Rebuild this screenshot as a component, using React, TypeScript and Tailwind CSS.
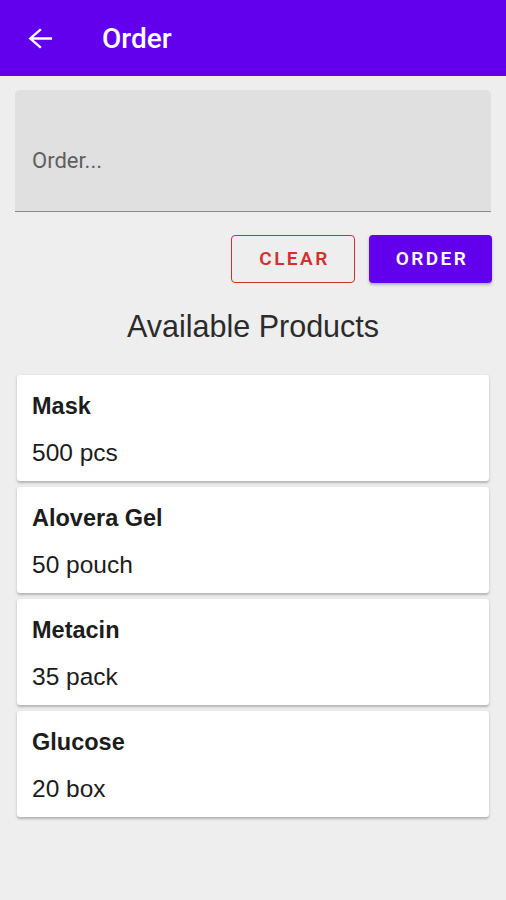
import React from "react";

type Product = {
  name: string;
  qty: string;
};

const products: Product[] = [
  { name: "Mask", qty: "500 pcs" },
  { name: "Alovera Gel", qty: "50 pouch" },
  { name: "Metacin", qty: "35 pack" },
  { name: "Glucose", qty: "20 box" },
];

function BackArrow() {
  return (
    <svg
      viewBox="4 4 16 16"
      width={24}
      height={21}
      preserveAspectRatio="none"
      fill="white"
      aria-hidden
    >
      <path d="M20 11.1H7.6l5.6-5.6L12 4.3 4.3 12l7.7 7.7 1.2-1.2-5.6-5.6H20v-1.8z" />
    </svg>
  );
}

const roboto = { fontFamily: "Roboto, 'Liberation Sans', sans-serif" };
const arial = { fontFamily: "'Liberation Sans', Arial, sans-serif" };

export default function App() {
  return (
    <div className="flex min-h-[900px] w-full flex-col bg-[#eeeeee]" style={roboto}>
      {/* Toolbar */}
      <header className="flex h-[76px] items-center bg-[#6200ee] pl-[28px]">
        <BackArrow />
        <h1 className="ml-[50px] mt-[2px] text-[28px] font-medium leading-none text-white">Order</h1>
      </header>

      {/* Input */}
      <div className="mx-[15px] mt-[14px] flex h-[122px] items-center rounded-t-[5px] border-b-[1.5px] border-[#8a8a8a] bg-[#e0e0e0] pl-[17px] pt-[20px]">
        <span className="text-[22px] text-[#5f5f5f]">Order...</span>
      </div>

      {/* Actions */}
      <div className="mt-[23px] flex justify-end gap-[14px] pr-[14px]">
        <button className="flex h-[48px] w-[124px] items-center justify-center rounded-[4px] border border-[#d32f2f] pl-[3px] text-[19px] font-semibold tracking-[0.13em] text-[#d32f2f]">
          CLEAR
        </button>
        <button className="flex h-[48px] w-[123px] items-center justify-center rounded-[4px] bg-[#6200ee] pl-[3px] text-[19px] font-semibold tracking-[0.13em] text-white shadow-[0_2px_3px_rgba(0,0,0,0.25)]">
          ORDER
        </button>
      </div>

      <h2 className="mt-[25px] text-center text-[30.5px] leading-[36px] text-[#2b2b2b]" style={arial}>
        Available Products
      </h2>

      {/* Product list */}
      <div className="mx-[17px] mt-[31px] flex flex-col gap-[6px]" style={arial}>
        {products.map((p) => (
          <div
            key={p.name}
            className="flex h-[106px] flex-col rounded-[3px] bg-white pl-[15px] pt-[17px] shadow-[0_1.5px_2.5px_rgba(0,0,0,0.25)]"
          >
            <span className="text-[23.5px] font-bold leading-[28px] text-[#1c1c1c]">{p.name}</span>
            <span className="mt-[19px] text-[24.5px] leading-[28px] text-[#1c1c1c]">{p.qty}</span>
          </div>
        ))}
      </div>
    </div>
  );
}
